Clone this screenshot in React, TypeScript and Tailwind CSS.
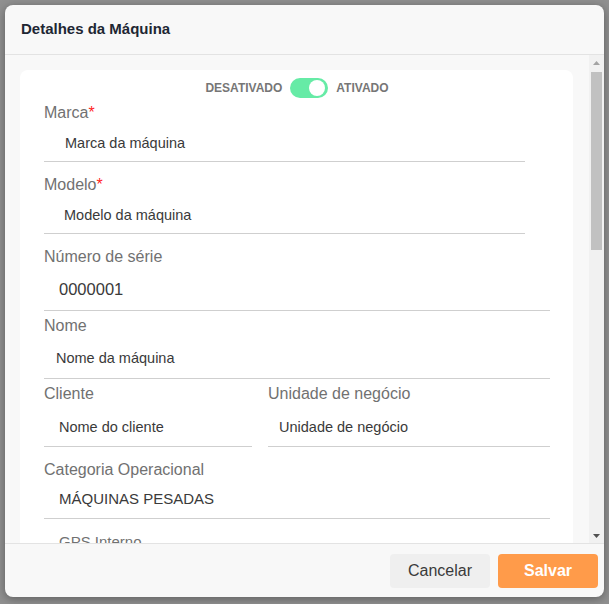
import { useState } from "react";

const font = { fontFamily: '"Liberation Sans", Arial, sans-serif' };

function Label({ text, required, className = "" }: { text: string; required?: boolean; className?: string }) {
  return (
    <div className={`h-5 text-[16px] leading-5 text-[#717171] ${className}`}>
      {text}
      {required && <span className="text-[#ff1f1f]">*</span>}
    </div>
  );
}

function Field({
  label,
  value,
  required,
  labelClass,
  boxClass,
  valueClass,
}: {
  label: string;
  value: string;
  required?: boolean;
  labelClass: string;
  boxClass: string;
  valueClass: string;
}) {
  return (
    <div className="flex flex-col">
      <Label text={label} required={required} className={labelClass} />
      <div className={`flex items-center border-b border-[#cfcfcf] ${boxClass}`}>
        <span className={`text-[#3a3a3a] ${valueClass}`}>{value}</span>
      </div>
    </div>
  );
}

// Barra de rolagem desenhada (o navegador headless esconde a nativa)
function FakeScrollbar() {
  return (
    <div className="flex w-[15px] shrink-0 flex-col bg-[#f1f1f1]">
      <div className="flex h-[15px] items-center justify-center">
        <svg width="7" height="4" viewBox="0 0 7 4">
          <path d="M3.5 0 L7 4 L0 4 Z" fill="#a3a3a3" />
        </svg>
      </div>
      <div className="mx-[2px] mt-[2px] h-[178px] bg-[#c1c1c1]" />
      <div className="flex-1" />
      <div className="flex h-[15px] items-center justify-center">
        <svg width="7" height="4" viewBox="0 0 7 4">
          <path d="M0 0 L7 0 L3.5 4 Z" fill="#505050" />
        </svg>
      </div>
    </div>
  );
}

export default function App() {
  const [ativo, setAtivo] = useState(true);

  return (
    <div className="flex h-[604px] w-[609px] bg-[#909090] pb-[7px] pl-[5px] pr-[5px] pt-[5px]" style={font}>
      <div className="flex min-h-0 flex-1 flex-col overflow-hidden rounded-[8px] bg-[#f8f8f8] shadow-[0_2px_10px_rgba(0,0,0,0.35)]">
        {/* Cabeçalho */}
        <div className="flex h-[50px] shrink-0 items-center border-b border-[#e3e3e3] pb-[1px] pl-4">
          <h1 className="text-[15px] font-bold text-[#1e2733]">Detalhes da Máquina</h1>
        </div>

        {/* Corpo */}
        <div className="flex min-h-0 flex-1">
          <div className="min-h-0 flex-1 overflow-hidden pl-[15px] pr-4 pt-[15px]">
            <div className="rounded-[8px] bg-white pb-6 pl-6 pr-[23px] pt-2">
              <div className="flex h-5 items-center justify-center gap-2 text-[12px] font-bold text-[#767676]">
                <span>DESATIVADO</span>
                <button
                  type="button"
                  onClick={() => setAtivo(!ativo)}
                  className={`flex h-5 w-[38px] items-center rounded-full px-[3px] ${ativo ? "justify-end bg-[#66eba6]" : "justify-start bg-[#cfcfcf]"}`}
                >
                  <span className="h-[16px] w-[16px] rounded-full bg-white" />
                </button>
                <span>ATIVADO</span>
              </div>

              <Field
                label="Marca"
                required
                value="Marca da máquina"
                labelClass="mt-[5px]"
                boxClass="h-[39px] w-[481px] pl-[21px] pt-[3px]"
                valueClass="text-[14.5px]"
              />
              <Field
                label="Modelo"
                required
                value="Modelo da máquina"
                labelClass="mt-[13px]"
                boxClass="h-[39px] w-[481px] pl-5 pt-[3px]"
                valueClass="text-[14.5px]"
              />
              <Field
                label="Número de série"
                value="0000001"
                labelClass="mt-[13px]"
                boxClass="h-[44px] pl-[15px] pt-[2px]"
                valueClass="text-[16.5px]"
              />
              <Field
                label="Nome"
                value="Nome da máquina"
                labelClass="mt-[5px]"
                boxClass="h-[43px] pl-3 pt-[3px]"
                valueClass="text-[14.5px]"
              />

              <div className="flex gap-4">
                <div className="w-[208px]">
                  <Field
                    label="Cliente"
                    value="Nome do cliente"
                    labelClass="mt-[5px]"
                    boxClass="h-[43px] pl-[15px] pt-[5px]"
                    valueClass="text-[14.5px]"
                  />
                </div>
                <div className="flex-1">
                  <Field
                    label="Unidade de negócio"
                    value="Unidade de negócio"
                    labelClass="mt-[5px]"
                    boxClass="h-[43px] pl-[11px] pt-[5px]"
                    valueClass="text-[14.5px]"
                  />
                </div>
              </div>

              <Field
                label="Categoria Operacional"
                value="MÁQUINAS PESADAS"
                labelClass="mt-[13px]"
                boxClass="h-[39px] pl-[15px]"
                valueClass="text-[15px]"
              />

              <div className="mt-[13px] h-5 pl-[15px] text-[15px] leading-5 text-[#717171]">GPS Interno</div>
              <div className="flex h-[40px] items-center border-b border-[#cfcfcf] pl-[15px] text-[14.5px] text-[#3a3a3a]">
                Não
              </div>
            </div>
          </div>
          <FakeScrollbar />
        </div>

        {/* Rodapé */}
        <div className="flex h-[54px] shrink-0 items-center justify-end gap-2 border-t border-[#e3e3e3] pr-[6px]">
          <button type="button" className="h-[34px] w-[100px] rounded-[4px] bg-[#efefef] text-[16px] text-[#3a3a3a]">
            Cancelar
          </button>
          <button type="button" className="h-[34px] w-[100px] rounded-[4px] bg-[#ff9b4a] text-[16px] font-bold text-white">
            Salvar
          </button>
        </div>
      </div>
    </div>
  );
}
